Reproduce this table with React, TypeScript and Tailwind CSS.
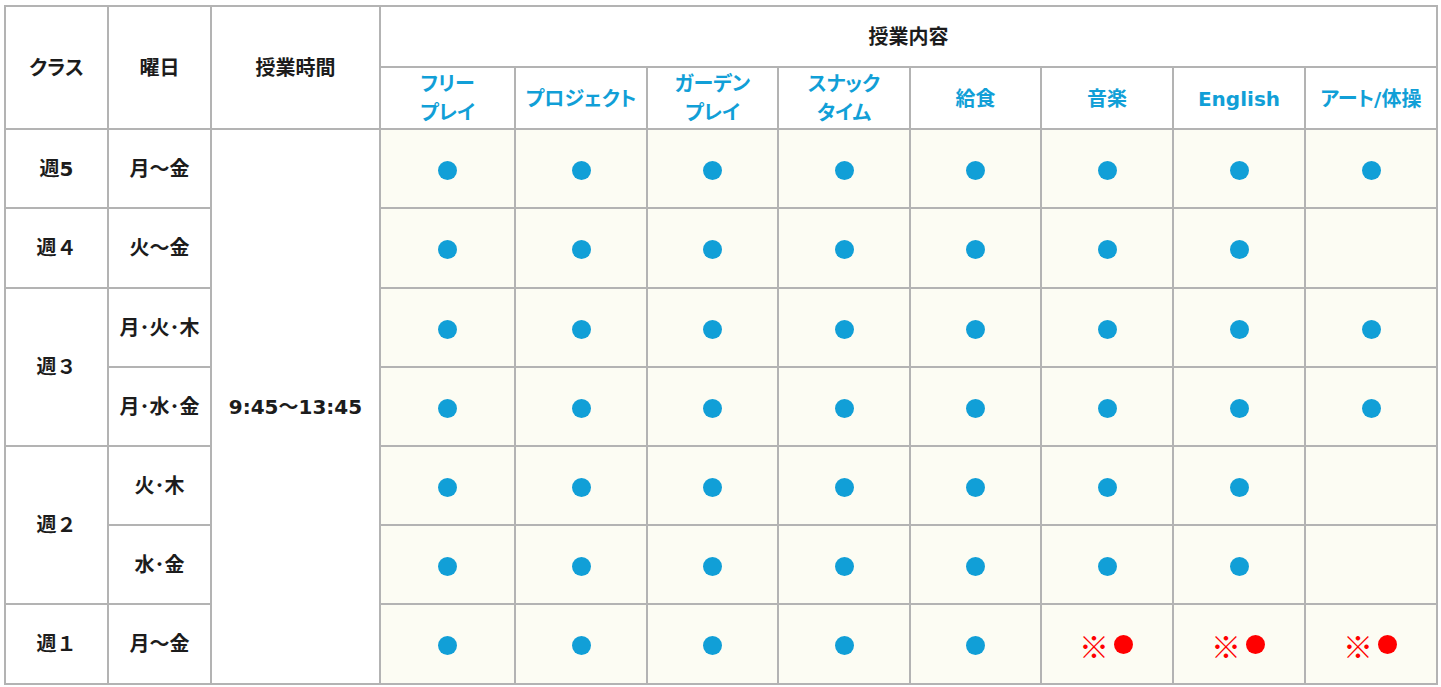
import React from "react";

const font = { fontFamily: '"DejaVu Sans", "Noto Sans CJK JP", sans-serif' };

type Mark = "b" | "r" | "";

const FW = ({ children }: { children: React.ReactNode }) => (
  <span className="[font-feature-settings:normal]">{children}</span>
);

const rows: { cls?: React.ReactNode; clsSpan?: number; day: string; marks: Mark[] }[] = [
  { cls: "週5", clsSpan: 1, day: "月〜金", marks: ["b", "b", "b", "b", "b", "b", "b", "b"] },
  { cls: <>週<FW>４</FW></>, clsSpan: 1, day: "火〜金", marks: ["b", "b", "b", "b", "b", "b", "b", ""] },
  { cls: <>週<FW>３</FW></>, clsSpan: 2, day: "月･火･木", marks: ["b", "b", "b", "b", "b", "b", "b", "b"] },
  { day: "月･水･金", marks: ["b", "b", "b", "b", "b", "b", "b", "b"] },
  { cls: <>週<FW>２</FW></>, clsSpan: 2, day: "火･木", marks: ["b", "b", "b", "b", "b", "b", "b", ""] },
  { day: "水･金", marks: ["b", "b", "b", "b", "b", "b", "b", ""] },
  { cls: <>週<FW>１</FW></>, clsSpan: 1, day: "月〜金", marks: ["b", "b", "b", "b", "b", "r", "r", "r"] },
];

const rowH = ["h-[79px]", "h-[80px]", "h-[79px]", "h-[79px]", "h-[79px]", "h-[79px]", "h-[80px]"];

const subjects: React.ReactNode[] = [
  <>フリー<br />プレイ</>,
  "プロジェクト",
  <>ガーデン<br />プレイ</>,
  <>スナック<br />タイム</>,
  "給食",
  "音楽",
  "English",
  "アート/体操",
];

const cell = "border-2 border-[#b3b3b3] text-center align-middle p-0";

function Dot({ red }: { red?: boolean }) {
  return (
    <span
      className={`inline-block w-[19px] h-[19px] rounded-full align-middle ${red ? "bg-[#ff0000]" : "bg-[#119fd7]"}`}
    />
  );
}

export default function App() {
  return (
    <div className="bg-white w-[1441px] h-[687px] pt-[5px] pl-[4px]" style={font}>
      <table className="border-collapse table-fixed w-[1434px] text-[20px] font-bold text-[#1c1c1c] [font-feature-settings:'palt']">
        <colgroup>
          <col className="w-[103px]" />
          <col className="w-[103px]" />
          <col className="w-[169px]" />
          <col className="w-[135px]" />
          <col className="w-[132px]" />
          <col className="w-[131px]" />
          <col className="w-[132px]" />
          <col className="w-[131px]" />
          <col className="w-[132px]" />
          <col className="w-[132px]" />
          <col className="w-[132px]" />
        </colgroup>
        <thead>
          <tr className="h-[61px]">
            <th rowSpan={2} className={cell}>クラス</th>
            <th rowSpan={2} className={cell}>曜日</th>
            <th rowSpan={2} className={cell}>授業時間</th>
            <th colSpan={8} className={cell}>授業内容</th>
          </tr>
          <tr className="h-[62px]">
            {subjects.map((s, i) => (
              <th key={i} className={`${cell} text-[#119fd7] leading-[29px] pt-[2px]`}>
                {s}
              </th>
            ))}
          </tr>
        </thead>
        <tbody>
          {rows.map((r, i) => (
            <tr key={i} className={rowH[i]}>
              {r.cls && (
                <td rowSpan={r.clsSpan} className={`${cell} bg-white`}>
                  {r.cls}
                </td>
              )}
              <td className={`${cell} bg-white`}>{r.day}</td>
              {i === 0 && (
                <td rowSpan={7} className={`${cell} bg-white`}>
                  9:45〜13:45
                </td>
              )}
              {r.marks.map((m, j) => (
                <td key={j} className={`${cell} bg-[#fcfcf3]`}>
                  {m === "b" && <Dot />}
                  {m === "r" && (
                    <span className="inline-flex items-center align-middle gap-[5px] text-[#ff0000] mr-[2px]">
                      <span
                        className="text-[30px] leading-none font-bold"
                        style={{ fontFamily: '"Noto Sans CJK JP", sans-serif' }}
                      >
                        ※
                      </span>
                      <Dot red />
                    </span>
                  )}
                </td>
              ))}
            </tr>
          ))}
        </tbody>
      </table>
    </div>
  );
}
